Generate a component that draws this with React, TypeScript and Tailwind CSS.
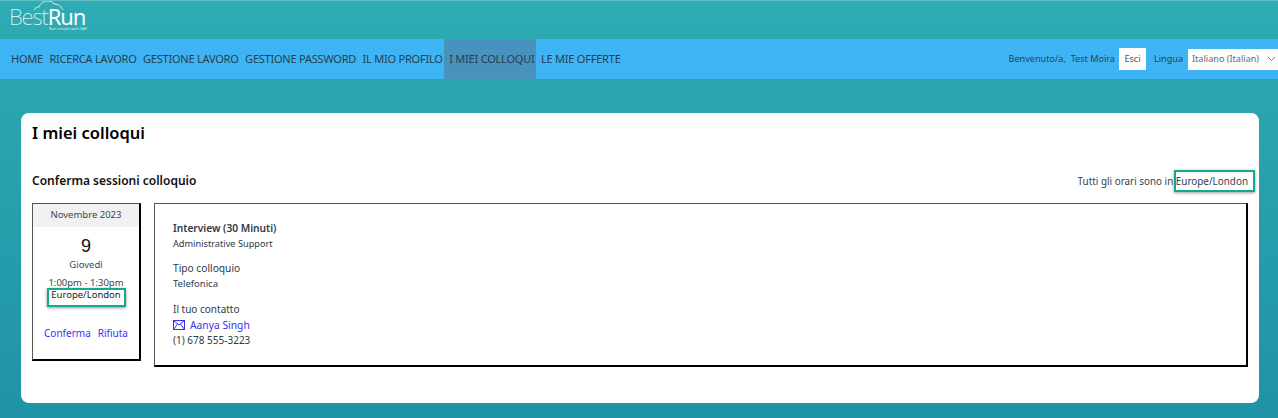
const NAV_ITEMS = [
  { label: 'HOME', active: false },
  { label: 'RICERCA LAVORO', active: false },
  { label: 'GESTIONE LAVORO', active: false },
  { label: 'GESTIONE PASSWORD', active: false },
  { label: 'IL MIO PROFILO', active: false },
  { label: 'I MIEI COLLOQUI', active: true },
  { label: 'LE MIE OFFERTE', active: false },
];

function Logo() {
  return (
    <div className="relative w-[90px] h-[38px] ml-[9px] overflow-hidden">
      <svg className="absolute left-[24px] top-0" width="32" height="10" viewBox="0 0 32 10" fill="none" stroke="#d5eef0" strokeWidth="1">
        <path d="M1 9c1-2 3-3 5-3 1-3 4-6 8-6s6 1 7 3c3 0 6 1 7 3s2 2 2 3" />
      </svg>
      <div className="absolute left-0 top-[6px] flex text-[22px] leading-[18px] tracking-[-1.1px] text-[#dff3f4]">
        <span className="font-extralight">Best</span>
        <span className="font-normal text-white">Run</span>
      </div>
      <div className="absolute left-[40px] top-[25px] text-[4px] leading-[5px] text-[#d5eef0]">Run simple with SAP</div>
    </div>
  );
}

export default function App() {
  return (
    <div className="relative w-[1278px] h-[418px] overflow-hidden bg-gradient-to-b from-[#2eabb3] to-[#1f93a6] font-['Noto_Sans',sans-serif] text-[#2b3a45]">
      {/* Logo */}
      <div className="h-[39px] border-t border-[#5fc0c6]">
        <Logo />
      </div>

      {/* Navigation */}
      <div className="h-[40px] bg-[#3fb4f5] flex items-stretch justify-between">
        <nav className="flex items-stretch pl-[6px] text-[11px] tracking-[-0.22px] text-[#24404f]">
          {NAV_ITEMS.map((item) => (
            <div
              key={item.label}
              className={`flex items-center pl-[5px] pr-[1.5px] ${item.active ? 'bg-[#4893bd]' : ''}`}
            >
              {item.label}
            </div>
          ))}
        </nav>
        <div className="flex items-center text-[9.1px] text-[#2b4350]">
          <span>Benvenuto/a,&nbsp; Test Moira</span>
          <span className="ml-[4px] h-[22px] w-[27px] bg-white flex items-center justify-center text-[#3c5a73]">Esci</span>
          <span className="ml-[8px]">Lingua</span>
          <div className="ml-[5px] h-[21px] w-[90px] bg-white flex items-center justify-between pl-[4px] pr-[2px] text-[#5b6b78]">
            <span>Italiano (Italian)</span>
            <svg width="9" height="6" viewBox="0 0 9 6" fill="none" stroke="#a855f7" strokeWidth="1">
              <path d="M1 1l3.5 3.5L8 1" />
            </svg>
          </div>
        </div>
      </div>

      {/* Card */}
      <main className="mt-[34px] mx-[21px] w-[1238px] h-[290px] bg-white rounded-[8px] px-[11px] pt-[9px]">
        <h1 className="text-[16.5px] leading-[22px] font-semibold text-black">I miei colloqui</h1>

        <div className="mt-[27px] h-[20px] flex items-center justify-between">
          <h2 className="text-[12px] font-semibold text-[#111]">Conferma sessioni colloquio</h2>
          <div className="relative text-[9.9px] text-[#33404d]">
            Tutti gli orari sono in Europe/London
            <div className="absolute right-[-7px] top-[-4px] w-[81px] h-[22px] border-2 border-[#14a98a] shadow-[0_1px_3px_rgba(0,0,0,0.4)]" />
          </div>
        </div>

        <div className="mt-[12px] flex gap-[13px]">
          {/* Date */}
          <div className="relative w-[109px] h-[158px] border border-[#555] border-r-2 border-b-2 border-r-black border-b-black flex flex-col items-center text-[9.5px] text-[#3a4650]">
            <div className="w-full h-[23px] bg-[#f1f1f1] flex items-center justify-center">Novembre 2023</div>
            <div className="mt-[7px] text-[18px] leading-[24px] font-['Liberation_Sans',sans-serif] text-[#111]">9</div>
            <div className="mt-[0px] leading-[14px]">Giovedì</div>
            <div className="mt-[4px] leading-[14px]">1:00pm - 1:30pm</div>
            <div className="mt-[-2px] leading-[14px] text-[#222]">Europe/London</div>
            <div className="absolute left-[14px] top-[84px] w-[79px] h-[19px] border-2 border-[#14a98a] shadow-[0_1px_3px_rgba(0,0,0,0.4)]" />
            <div className="mt-[24px] flex gap-[7px] text-[#3b2ff5] text-[10px]">
              <span>Conferma</span>
              <span>Rifiuta</span>
            </div>
          </div>

          {/* Detail */}
          <div className="w-[1094px] h-[164px] border border-[#555] border-r-2 border-b-2 border-r-black border-b-black px-[18px] pt-[16px] text-[10px] leading-[16px] text-[#2f3a44]">
            <div className="font-semibold text-[10.2px]">Interview (30 Minuti)</div>
            <div className="text-[9.2px]">Administrative Support</div>
            <div className="mt-[8px] text-[10.2px]">Tipo colloquio</div>
            <div className="text-[9.5px]">Telefonica</div>
            <div className="mt-[9px]">Il tuo contatto</div>
            <div className="flex items-center gap-[5px] text-[10.3px] text-[#3b2ff5]">
              <svg width="12" height="10" viewBox="0 0 12 10" fill="none" stroke="#3b2ff5" strokeWidth="1">
                <rect x="0.5" y="0.5" width="11" height="9" />
                <path d="M0.5 0.5L6 5l5.5-4.5M0.5 9.5L4.5 4M11.5 9.5L7.5 4" />
              </svg>
              Aanya Singh
            </div>
            <div className="leading-[15px]">(1) 678 555-3223</div>
          </div>
        </div>
      </main>
    </div>
  );
}
